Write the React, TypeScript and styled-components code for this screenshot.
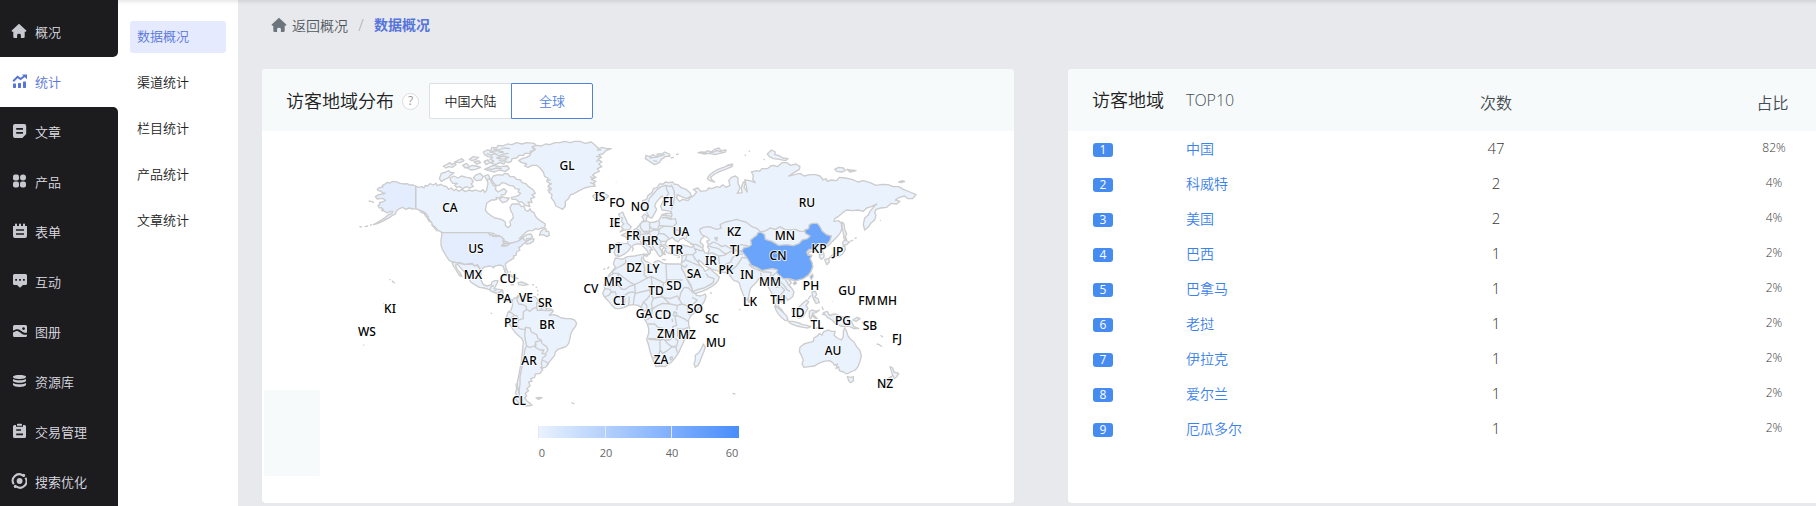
import React from "react";
import styled, { createGlobalStyle, css } from "styled-components";

const GlobalStyle = createGlobalStyle`
  * { box-sizing: border-box; }
  body {
    margin: 0;
    background: #e8e9ed;
    font-family: "Open Sans", "Noto Sans CJK SC", sans-serif;
    font-size: 14px;
    font-weight: 350;
    color: #222;
  }
  a { color: inherit; text-decoration: none; }
`;

const DARK = "#1c1c1e";
const BLUE = "#5674da";

const Page = styled.div`
  display: flex;
  height: 100vh;
  min-height: 506px;
  overflow: hidden;
`;

const SideNav = styled.nav`
  flex: 0 0 118px;
  background: #fff;
  border-top: 7px solid ${DARK};
`;

const SideItem = styled.a<{ $state?: "active" | "before" | "after" }>`
  display: flex;
  align-items: center;
  gap: 8px;
  height: 50px;
  padding: 0 0 2px 11px;
  font-size: 13px;
  color: #dcdce2;
  background: ${DARK};
  svg { width: 16px; height: 16px; color: #c8c8d0; }
  ${(p) => p.$state === "before" && css`border-bottom-right-radius: 5px;`}
  ${(p) => p.$state === "after" && css`border-top-right-radius: 5px;`}
  ${(p) => p.$state === "active" && css`
    background: #fff;
    color: ${BLUE};
    svg { color: ${BLUE}; }
  `}
`;

const SubNav = styled.nav`
  flex: 0 0 120px;
  display: flex;
  flex-direction: column;
  gap: 14px;
  padding: 21px 12px 0;
  background: #fff;
  box-shadow: inset 0 6px 5px -5px rgba(0, 0, 0, 0.14);
`;

const SubItem = styled.a<{ $active?: boolean }>`
  height: 32px;
  line-height: 31px;
  padding-left: 7px;
  border-radius: 3px;
  font-size: 13px;
  color: ${(p) => (p.$active ? BLUE : "#222")};
  background: ${(p) => (p.$active ? "#e5eaff" : "transparent")};
`;

const Main = styled.main`
  flex: 1;
  min-width: 0;
  display: flex;
  flex-direction: column;
  padding: 0 0 3px 24px;
  box-shadow: inset 0 6px 5px -5px rgba(0, 0, 0, 0.14);
`;

const Breadcrumb = styled.nav`
  display: flex;
  align-items: center;
  height: 50px;
  margin-bottom: 19px;
  padding-left: 9px;
  color: #50585f;
  svg { width: 16px; height: 16px; margin-right: 5px; color: #6c757d; }
`;

const CrumbLink = styled.a`
  display: flex;
  align-items: center;
`;

const Slash = styled.span`
  width: 26px;
  text-align: center;
  font-size: 16px;
  color: #a5aab0;
`;

const Current = styled.strong`
  padding-bottom: 2px;
  color: ${BLUE};
`;

const Cards = styled.div`
  flex: 1;
  display: flex;
  gap: 54px;
  margin-right: -4px;
`;

const Card = styled.section`
  position: relative;
  flex: 1 1 0;
  min-width: 0;
  background: #fff;
  border-radius: 4px;
  overflow: hidden;
`;

const CardHeader = styled.header`
  display: flex;
  align-items: center;
  height: 62px;
  padding: 2px 0 0 24px;
  background: #f6fafb;
`;

const Title = styled.h2`
  margin: 0;
  font-size: 18px;
  font-weight: inherit;
  line-height: 24px;
  color: #222;
`;

const Help = styled.button`
  width: 17px;
  height: 17px;
  margin: 0 10px 0 8px;
  padding: 0;
  border: 1px solid #dcdcdc;
  border-radius: 50%;
  background: #fff;
  font: 12px/14px "Open Sans", sans-serif;
  color: #999;
`;

const Switch = styled.div`
  display: flex;
`;

const SwitchButton = styled.button<{ $active?: boolean }>`
  width: 82px;
  height: 36px;
  padding: 0 0 1px;
  border: 1px solid ${(p) => (p.$active ? "#5080e0" : "#dcdfe3")};
  border-right-width: ${(p) => (p.$active ? "1px" : "0")};
  border-radius: ${(p) => (p.$active ? "0 2px 2px 0" : "2px 0 0 2px")};
  background: #fff;
  font-family: inherit;
  font-size: 13px;
  font-weight: inherit;
  color: ${(p) => (p.$active ? "#5080e0" : "#222")};
`;

const MapArea = styled.div`
  svg { display: block; width: 100%; height: 372px; }
`;

const Tip = styled.div`
  position: absolute;
  left: 2px;
  bottom: 27px;
  width: 56px;
  height: 86px;
  border-radius: 2px;
  background: #f6fafb;
`;

const Table = styled.table`
  width: 100%;
  table-layout: fixed;
  border-collapse: collapse;
  thead tr { height: 62px; background: #f6fafb; }
  tbody tr { height: 35px; }
  th, td { padding: 0; }
  th { font-size: 16px; font-weight: inherit; color: #454c52; text-align: left; }
`;

const RankHead = styled.th`
  && { width: 118px; padding-left: 24px; }
`;
const NameHead = styled.th`
  && { width: 78px; }
`;
const CountHead = styled.th`
  && { text-align: center; padding-top: 3px; }
`;
const RatioHead = styled.th`
  && { width: 92px; text-align: center; padding: 3px 3px 0 0; }
`;

const RankCell = styled.td`
  && { padding: 3px 0 0 25px; }
`;
const Badge = styled.span`
  display: block;
  width: 20px;
  height: 14px;
  border-radius: 3px;
  background: #468cf0;
  color: #fff;
  font-size: 12px;
  font-weight: 400;
  line-height: 14px;
  text-align: center;
`;
const NameCell = styled.td`
  && { padding-bottom: 2px; }
  color: #3c82e8;
  font-size: 14px;
  white-space: nowrap;
`;
const CountCell = styled.td`
  && { padding-bottom: 2px; }
  text-align: center;
  font-size: 15px;
  color: #383838;
`;
const RatioCell = styled.td`
  && { padding-bottom: 3px; }
  text-align: center;
  font-size: 12px;
  color: #383838;
`;

const Icon = ({ children }: { children: React.ReactNode }) => (
  <svg viewBox="0 0 16 16" fill="currentColor" aria-hidden="true">{children}</svg>
);

const HomeIcon = () => (
  <Icon>
    <path d="M8 .8 15.3 7.6Q15.8 8.6 14.6 8.7H13.7V13.7Q13.7 15 12.4 15H9.9V12Q9.9 10.8 8 10.8T6.1 12V15H3.6Q2.3 15 2.3 13.7V8.7H1.4Q.2 8.6.7 7.6Z" />
  </Icon>
);

const ICONS: Record<string, React.ReactNode> = {
  stats: (
    <Icon>
      <rect x="2" y="10.5" width="3" height="4.4" rx=".6" />
      <rect x="7" y="10" width="3" height="4.9" rx=".6" />
      <rect x="12" y="8.6" width="3" height="6.3" rx=".6" />
      <path d="M2.2 8.2 6.6 3.9 9.6 6 13.6 3" fill="none" stroke="currentColor" strokeWidth="2" />
      <path d="M11 1.4H16V6.2Z" />
    </Icon>
  ),
  doc: (
    <Icon>
      <path fillRule="evenodd" d="M4 1H13.2Q15.2 1 15.2 3V11L11.4 15H4Q2 15 2 13V3Q2 1 4 1ZM5.2 5V6.8H12V5ZM5.2 9V10.8H12V9Z" />
    </Icon>
  ),
  grid: (
    <Icon>
      <rect x="2" y="1.4" width="6" height="6" rx="2" />
      <rect x="9" y="1.4" width="6" height="6" rx="3" />
      <rect x="2" y="8.4" width="6" height="6" rx="2" />
      <rect x="9" y="8.4" width="6" height="6" rx="2" />
    </Icon>
  ),
  form: (
    <Icon>
      <path fillRule="evenodd" d="M2 3H4V1.2Q4 .6 5 .6T6 1.2V3H8V1.2Q8 .6 9 .6T10 1.2V3H12V1.2Q12 .6 13 .6T14 1.2V3H16V13Q16 15 14 15H4Q2 15 2 13ZM5 6.2V7.8H13V6.2ZM5 10.2V11.8H13V10.2Z" />
    </Icon>
  ),
  chat: (
    <Icon>
      <path fillRule="evenodd" d="M3.5 1H14.5Q16 1 16 2.5V10.5Q16 12 14.5 12H12L9 14.8 6 12H3.5Q2 12 2 10.5V2.5Q2 1 3.5 1ZM4.2 6V7.8H6V6ZM8.1 6V7.8H9.9V6ZM12 6V7.8H13.8V6Z" />
    </Icon>
  ),
  album: (
    <Icon>
      <path fillRule="evenodd" d="M3.5 2H14.5Q16 2 16 3.5V9.6C11.5 10.8 10 6 6.5 6.2 4.6 6.2 3.3 6.9 2 7.6V3.5Q2 2 3.5 2ZM12.5 4.2A1.4 1.4 0 1 0 12.6 4.2Z" />
      <path d="M2 9.6C4 8.4 5.6 7.8 7 8.2 10 9.2 11 12.4 16 11.8V12.5Q16 14 14.5 14H3.5Q2 14 2 12.5Z" />
    </Icon>
  ),
  data: (
    <Icon>
      <path d="M2 4C2 1.4 15 1.4 15 4S2 6.6 2 4Z" />
      <path d="M2 5.9C4 7.7 13 7.7 15 5.9V8C14 10.4 3 10.4 2 8Z" />
      <path d="M2 10C4 11.8 13 11.8 15 10V12C14 14.5 3 14.5 2 12Z" />
    </Icon>
  ),
  trade: (
    <Icon>
      <path fillRule="evenodd" d="M3.5 2H5V3.8H12V2H13.5Q15 2 15 3.5V13.5Q15 15 13.5 15H3.5Q2 15 2 13.5V3.5Q2 2 3.5 2ZM5.2 6.2V7.7H10V6.2ZM5.2 10.6V12.2H12V10.6Z" />
      <rect x="6" y=".8" width="5" height="2" rx=".6" />
    </Icon>
  ),
  seo: (
    <Icon>
      <circle cx="8.6" cy="8" r="2.9" />
      <g fill="none" stroke="currentColor" strokeWidth="2">
        <path d="M2.8 11.2A6.4 6.4 0 0 1 11.6 2.3" />
        <path d="M14.4 4.8A6.4 6.4 0 0 1 5.6 13.7" />
      </g>
      <circle cx="12.6" cy="2.4" r="1.6" />
      <circle cx="4.4" cy="13.4" r="1.6" />
    </Icon>
  ),
};

const SIDE: [string, string][] = [
  ["home", "概况"],
  ["stats", "统计"],
  ["doc", "文章"],
  ["grid", "产品"],
  ["form", "表单"],
  ["chat", "互动"],
  ["album", "图册"],
  ["data", "资源库"],
  ["trade", "交易管理"],
  ["seo", "搜索优化"],
];

const SUB = ["数据概况", "渠道统计", "栏目统计", "产品统计", "文章统计"];

const ROWS: [string, number, string][] = [
  ["中国", 47, "82%"],
  ["科威特", 2, "4%"],
  ["美国", 2, "4%"],
  ["巴西", 1, "2%"],
  ["巴拿马", 1, "2%"],
  ["老挝", 1, "2%"],
  ["伊拉克", 1, "2%"],
  ["爱尔兰", 1, "2%"],
  ["厄瓜多尔", 1, "2%"],
];

const LABELS: [string, number, number][] = [
  ["CA", 450, 208], ["US", 476, 249], ["MX", 473, 275], ["CU", 508, 279],
  ["KI", 390, 309], ["WS", 367, 332], ["PA", 504, 299], ["VE", 526, 298],
  ["SR", 545, 303], ["CV", 591, 289], ["PE", 511, 323], ["BR", 547, 325],
  ["AR", 529, 361], ["CL", 519, 401], ["GL", 567, 166], ["IS", 600, 197],
  ["FO", 617, 203], ["NO", 640, 207], ["FI", 668, 202], ["IE", 615, 223],
  ["FR", 633, 236], ["HR", 650, 241], ["UA", 681, 232], ["PT", 615, 249],
  ["TR", 676, 250], ["KZ", 734, 232], ["DZ", 634, 268], ["LY", 653, 269],
  ["SA", 694, 274], ["IR", 711, 261], ["PK", 726, 270], ["TJ", 735, 250],
  ["MR", 613, 282], ["TD", 656, 291], ["SD", 674, 286], ["CI", 619, 301],
  ["GA", 644, 314], ["CD", 663, 315], ["SO", 695, 309], ["SC", 712, 319],
  ["RU", 807, 203], ["MN", 785, 236], ["CN", 778, 256], ["KP", 819, 249],
  ["JP", 838, 252], ["IN", 747, 275], ["ZM", 666, 334], ["MZ", 687, 335],
  ["MU", 716, 343], ["ZA", 661, 360], ["LK", 750, 302], ["TH", 778, 300],
  ["MM", 770, 282], ["PH", 811, 286], ["GU", 847, 291], ["FM", 867, 301],
  ["MH", 887, 301], ["ID", 798, 313], ["TL", 817, 325], ["PG", 843, 321],
  ["SB", 870, 326], ["FJ", 897, 339], ["AU", 833, 351], ["NZ", 885, 384],
];

/* Land outlines, at three units to a map unit. */
const ALASKA =
  "M197,168 190,165 178,165 172,161 165,162 150,160 138,155 128,154 120,159 112,157 104,163 97,166 99,171 90,172 82,177 84,182 92,183 98,188 106,190 96,192 86,194 76,200 82,207 92,206 100,206 106,211 98,216 88,217 90,223 84,226 88,234 94,233 100,238 94,241 104,244 112,249 120,245 128,244 126,250 116,254 106,262 94,270 82,278 70,284 82,281 96,275 108,268 120,262 128,256 136,252 140,242 148,236 158,232 166,238 178,234 188,237 197,236Z";
const CANADA =
  "M197,168 206,172 216,170 222,174 226,166 232,168 240,161 250,165 258,160 262,167 272,163 282,168 290,170 296,178 304,174 312,182 318,177 326,184 336,178 346,185 356,180 366,183 378,180 390,185 400,179 404,188 410,180 414,160 410,148 418,144 424,156 430,166 438,170 436,178 444,186 452,182 462,176 470,184 464,194 456,194 452,201 446,204 438,202 440,208 432,210 424,210 418,214 410,220 408,230 406,240 412,248 422,256 434,264 446,266 458,270 466,276 466,286 474,293 482,286 480,274 490,264 488,252 482,242 480,232 486,222 498,222 508,222 514,230 522,228 526,240 534,244 540,236 544,244 552,248 556,258 562,266 574,274 586,282 584,292 574,294 566,298 556,296 548,302 536,302 526,308 516,318 508,326 518,322 530,314 542,312 548,320 540,326 530,326 530,334 540,328 552,326 550,334 540,340 530,342 524,336 518,328 510,330 502,336 488,338 478,340 470,346 460,348 455,345 464,340 462,328 452,320 440,316 430,310 415,308 276,308 270,304 262,300 256,292 248,286 244,276 236,272 234,262 226,258 224,250 214,248 208,240 197,236Z";
const USA =
  "M276,308 415,308 420,316 430,312 440,318 454,320 460,328 462,338 455,348 470,348 480,340 490,338 502,334 510,330 518,324 524,330 528,336 520,342 512,350 506,352 510,360 500,366 498,376 490,378 492,384 480,392 472,396 466,402 468,414 474,426 470,434 464,424 460,410 452,405 440,407 430,410 432,414 420,408 410,410 400,412 396,422 390,416 382,404 374,408 366,400 354,402 344,403 330,398 316,398 304,394 298,392 290,380 284,370 277,358 273,346 273,330 275,318Z";
const MEXICO =
  "M306,396 330,400 344,404 366,402 374,408 382,406 390,418 394,426 392,438 394,452 400,464 412,468 424,464 426,456 434,452 444,452 440,462 436,470 432,476 446,478 458,480 460,490 456,500 466,508 478,506 488,510 484,516 474,512 464,514 452,500 440,490 428,486 416,478 402,474 388,472 374,464 362,456 358,448 360,440 350,432 340,422 332,414 322,402 316,406 322,418 330,428 336,440 328,436 318,420 310,408Z";
const SOUTH_AMERICA =
  "M486,512 494,504 500,502 506,496 512,500 520,500 526,496 540,500 556,500 562,508 566,518 574,528 584,532 594,536 606,538 610,544 604,550 598,556 612,554 624,558 634,564 648,566 662,566 674,570 680,580 676,590 668,600 662,612 660,626 656,640 648,650 636,654 624,658 616,666 614,676 606,686 598,696 592,706 586,712 578,714 572,712 578,720 570,730 556,732 554,742 542,746 546,754 536,756 540,768 530,776 536,782 526,790 530,798 524,804 530,812 540,820 546,826 530,828 516,824 504,816 496,806 502,798 496,788 502,772 502,756 506,738 510,716 514,696 516,676 518,656 520,636 516,626 504,616 494,606 486,594 480,584 470,570 470,558 474,546 482,542 486,532 488,522Z";
const WEST_ISLANDS = [
  "M302,152 300,144 312,138 324,144 334,138 350,142 362,144 370,154 364,162 370,170 358,174 350,170 338,176 330,170 320,172 314,166 322,160 308,160Z",
  "M268,146 274,130 288,126 296,122 304,128 312,128 302,136 294,144 284,148 274,154Z",
  "M280,108 290,104 300,98 306,104 316,98 318,104 308,112 296,110 288,114Z",
  "M314,96 326,90 336,86 342,92 330,98Z",
  "M358,88 370,80 386,82 378,88 366,92Z",
  "M338,106 350,100 358,110 346,114Z",
  "M352,114 366,106 380,108 392,112 376,118 362,120Z",
  "M372,96 386,92 392,98 380,102Z",
  "M376,136 390,130 400,140 394,150 380,152 370,144Z",
  "M404,118 416,112 430,106 450,110 472,108 478,116 466,124 448,120 434,126 416,122Z",
  "M400,66 412,60 422,62 426,52 440,54 444,46 458,48 472,42 486,44 500,38 516,42 530,38 552,40 560,48 548,54 556,60 540,64 544,70 524,70 520,76 508,76 500,84 486,86 484,94 476,98 466,94 462,102 448,98 438,104 424,100 430,92 420,88 428,82 414,80 404,74Z",
  "M420,66 440,62 460,66 440,72ZM440,84 460,78 476,82 460,88Z",
  "M402,94 414,90 420,98 408,104Z",
  "M410,70 424,76 434,70 446,78 460,72 476,70M430,58 446,60 462,54 480,56M446,90 456,94 470,88M420,98 432,94M410,116 426,118 440,114 456,116",
  "M424,148 430,138 446,134 458,136 464,130 474,132 480,140 492,140 500,148 512,150 516,158 526,160 536,170 550,180 556,190 546,194 554,202 542,206 546,218 534,216 540,230 526,226 516,216 506,216 498,208 486,208 484,202 496,200 506,196 512,190 504,186 508,178 496,176 490,168 478,166 466,160 456,158 448,166 438,166 430,158Z",
  "M448,208 458,200 468,204 478,204 470,214 458,218Z",
  "M404,138 414,134 420,144 410,150Z",
  "M568,316 572,306 578,298 588,296 588,304 596,304 598,316 590,320 580,314Z",
  "M28,290 36,291M44,290 54,288M56,213 66,215 72,218M60,286 66,284",
  "M220,244 232,256M226,248 236,262M230,262 240,276M236,266 244,278M244,284 258,298M250,290 262,304M212,240 228,254",
  "M420,312 434,318 448,316M426,318 440,320M456,334 468,334 480,342M458,344 472,346 482,338M462,340 476,340",
  "M454,438 466,430 480,434 492,440 504,446 496,446 480,438 466,436Z",
  "M504,458 514,456 526,460 534,464 520,466 506,464Z",
  "M482,464 492,465M546,464 552,465M558,470 560,474M562,480 564,484M562,492 565,496M466,418 470,420M480,424 482,428",
  "M558,804 568,802 576,803 566,808ZM664,818 674,822M422,549 426,551M118,448 122,450M126,452 134,460M100,520 103,522M40,645 43,646",
];
const WEST_BORDERS =
  "M474,546 484,548 494,556 502,558M470,562 480,566 488,560 494,554M502,558 506,570 520,566 520,546 530,538 528,528 518,524 506,522 500,508 508,498M530,538 540,544 548,536 560,532 560,518 566,518M560,532 562,542 574,540 586,542 598,542 606,540M574,540 576,528M588,542 590,534M506,570 502,582 506,594 516,598 526,598 526,592 540,594 544,606 560,614 564,626 574,630 576,642M526,598 524,616 526,630 530,648 538,652 548,650 558,646 556,636 572,632M530,648 524,660 522,680 518,700 514,720 510,740 510,760 508,780 508,804 514,820M556,642 556,652 570,660 582,660 576,670 586,672 594,660 590,650 578,642M590,674 578,684 574,700 576,712M576,690 590,696 594,704M420,480 424,468 432,468M430,484 440,480M440,490 458,482M452,500 460,496M474,514 478,506M504,772 506,790M498,760 500,780";

const GREENLAND =
  "M-64,92 -54,86 -40,82 -30,76 -26,66 -14,58 -24,50 -8,46 4,48 16,42 30,44 44,38 60,38 74,34 90,38 104,34 120,34 136,40 154,36 164,44 176,56 186,52 200,56 214,56 198,62 188,72 176,74 184,82 174,88 186,96 176,102 186,110 172,116 178,124 164,130 158,136 168,142 154,148 168,154 160,160 166,168 150,170 134,174 118,182 100,192 92,194 84,208 76,214 76,228 68,238 60,234 48,228 42,214 34,204 36,194 26,186 34,176 24,170 30,160 20,154 24,144 14,140 10,126 0,114 -10,106 -24,106 -36,112 -46,108 -40,102 -54,98Z";
const EURASIA =
  "M308,240 302,230 312,222 308,212 320,208 324,196 336,188 340,176 352,172 358,162 370,162 376,156 386,158 398,156 402,162 414,164 422,172 438,178 450,188 454,198 440,206 424,200 412,194 410,204 418,214 428,208 444,212 450,204 462,196 470,186 460,178 474,174 482,184 500,182 506,174 516,176 530,170 540,172 548,164 558,172 570,166 566,152 574,142 586,138 594,144 594,160 600,174 592,190 606,188 604,172 610,156 616,158 612,172 622,186 618,164 614,150 630,152 646,158 638,148 640,136 634,126 650,122 658,124 666,116 682,116 692,108 700,106 712,110 726,98 740,98 752,106 768,102 780,110 778,118 762,128 746,138 764,134 780,130 792,138 810,134 826,134 840,138 850,150 858,146 862,154 874,150 890,152 898,142 916,144 936,148 954,156 970,152 990,158 1008,166 1026,163 1044,164 1060,170 1076,170 1090,178 1110,186 1128,194 1118,206 1104,206 1094,198 1078,202 1066,210 1080,214 1070,222 1054,220 1040,232 1022,234 1008,238 1004,248 1008,256 1004,270 992,280 986,290 974,300 970,284 974,264 984,256 990,244 1000,232 1010,222 994,230 980,234 970,244 954,240 938,242 920,240 908,248 894,260 884,266 882,274 896,272 904,280 906,296 900,310 890,322 878,334 868,344 860,350 854,356 846,362 852,372 852,382 844,388 838,382 840,374 832,364 824,362 808,366 802,374 814,376 810,386 816,398 818,410 812,426 804,436 790,444 770,450 756,450 746,448 754,458 748,466 756,476 762,486 758,500 748,508 742,510 736,500 728,496 722,502 724,516 716,512 710,506 712,518 716,530 726,540 732,552 722,546 712,536 704,520 700,506 696,492 690,480 684,468 676,464 672,450 664,444 656,446 650,456 640,466 632,474 628,488 626,502 620,510 614,504 608,490 602,474 598,460 592,454 582,452 574,442 566,432 556,428 546,426 530,422 516,418 504,412 494,406 484,396 476,390 476,400 484,410 490,414 494,424 502,420 510,414 516,422 528,432 538,442 534,452 526,462 514,470 500,478 486,484 474,488 462,492 456,480 454,468 446,454 438,442 430,428 424,414 422,404 426,392 426,382 424,372 410,376 394,372 382,368 374,360 372,350 364,348 358,352 364,362 368,374 360,380 354,374 350,366 342,356 336,346 326,338 318,332 314,336 322,346 332,352 338,360 330,360 332,368 326,374 322,362 312,352 304,342 292,342 282,344 272,352 266,362 256,370 246,376 236,380 226,376 222,366 228,352 224,342 234,338 250,341 262,340 264,330 256,320 244,316 256,310 268,306 280,300 290,294 298,286 304,278 312,270 306,260 314,252 322,258 318,272 330,278 344,276 356,272 362,262 366,254 378,250 392,250 394,244 380,242 366,240 362,228 368,216 374,206 366,198 358,206 348,218 344,228 350,238 344,250 336,264 328,262 322,250 316,240Z";
const CHINA =
  "M662,306 674,314 676,328 696,334 716,346 740,344 760,347 778,340 786,330 802,326 810,318 796,310 794,300 806,296 808,284 818,280 832,280 840,290 846,302 860,314 874,318 870,332 858,346 842,344 830,350 818,358 808,358 800,366 804,376 816,376 810,386 816,398 818,410 812,426 804,436 790,446 768,452 748,446 730,446 718,436 710,428 712,420 698,416 682,418 666,422 650,412 634,406 626,392 618,380 606,364 610,354 626,350 634,344 632,330 642,322 650,316 654,308ZM810,440 818,432 819,440 814,448ZM760,460 766,454 769,460 763,464Z";
const AFRICA =
  "M226,384 238,386 246,388 262,380 284,378 302,374 312,374 310,384 314,392 326,398 338,404 346,394 356,392 370,400 388,402 404,402 418,402 426,406 424,414 432,428 440,446 448,462 456,476 460,486 470,496 482,498 496,492 498,500 492,516 480,532 466,546 452,558 446,570 446,584 450,600 446,616 434,628 428,642 422,654 418,664 408,680 400,690 388,702 374,710 360,708 348,710 342,698 336,682 330,664 326,646 320,628 326,610 326,596 322,582 314,568 306,556 312,544 304,532 294,526 280,524 266,526 254,532 240,536 226,536 214,524 204,512 194,502 188,490 194,476 192,464 198,450 206,436 216,424 226,412 220,402Z";
const AUSTRALIA =
  "M780,652 792,642 806,638 820,634 822,624 834,616 838,610 846,616 850,606 866,600 874,604 886,604 882,616 892,624 904,630 910,620 910,604 914,594 920,604 924,618 932,628 942,636 950,650 960,662 964,678 960,694 954,710 946,720 932,726 920,732 910,726 898,722 896,710 888,716 892,702 884,706 878,698 868,692 852,694 836,700 824,708 808,710 792,712 786,702 790,690 784,676 778,664Z";
const EAST_ISLANDS = [
  "M158,198 166,192 174,196 178,188 194,190 206,198 196,208 180,210 166,208Z",
  "M316,86 318,76 330,80 340,74 350,82 352,72 366,72 374,66 388,72 390,78 376,80 364,88 358,98 344,104 334,98 326,92Z",
  "M392,84 402,82M408,74 416,72M228,156 229,157",
  "M474,68 484,66 496,68 502,62 514,66 524,58 536,54 544,62 558,60 556,66 540,70 524,74 508,70 494,72Z",
  "M484,68 500,66M508,68 522,66 530,62 546,66M328,84 344,82 358,78 374,74M340,92 352,94",
  "M36,160 28,166M24,150 32,150M30,174 22,182M170,60 184,60M168,80 180,80M176,92 168,94M150,140 162,146M150,158 164,162",
  "M578,104 566,106 550,112 534,118 520,126 508,136 502,146 510,152 524,156 516,150 512,142 524,132 540,124 556,118 576,110Z",
  "M236,252 248,246 252,256 258,268 262,280 274,290 268,300 254,300 240,306 250,296 242,290 252,282 244,274 248,264 240,262Z",
  "M220,270 232,264 238,274 234,288 220,292 214,282Z",
  "M490,642 496,652 492,664 486,678 480,694 474,706 466,712 462,702 466,690 466,676 476,668 484,656Z",
  "M682,72 694,60 706,66 704,74 716,76 728,84 744,86 736,92 718,88 700,86 688,80Z",
  "M670,88 674,89M614,76 618,75M626,64 630,63M560,106 578,102",
  "M884,118 896,112 910,114 916,122 904,126 890,124ZM920,118 932,120 948,122 930,126Z",
  "M1076,156 1086,152 1094,154 1084,158Z",
  "M868,384 880,380 896,380 908,372 916,358 914,344 908,350 904,362 892,368 876,376Z",
  "M854,388 866,386 868,396 860,404Z",
  "M908,338 914,330 928,336 920,344 910,346Z",
  "M906,276 912,282 914,298 920,312 916,320 920,330 912,326 910,308 906,292Z",
  "M930,334 940,330M944,326 950,323M1020,270 1022,272",
  "M704,528 714,534 728,546 740,558 744,570 736,572 724,562 714,550 708,540Z",
  "M744,574 758,574 774,578 788,584 802,586 812,590 804,594 790,592 770,588 754,582Z",
  "M756,538 770,538 780,528 790,518 800,510 806,516 798,526 804,536 796,548 790,560 778,564 764,560 758,550Z",
  "M808,544 816,540 828,544 838,540 828,548 816,550 824,558 832,566 824,564 816,556 812,568 808,560Z",
  "M816,486 826,484 830,494 824,502 834,506 838,518 828,520 822,510 818,500ZM804,508 814,496M820,506 826,514",
  "M846,530 850,540M846,552 860,556M820,596 832,594 852,592",
  "M850,548 862,544 868,556 884,552 900,558 920,566 934,574 942,590 956,596 942,596 926,588 914,590 902,588 888,582 876,570 862,562Z",
  "M938,570 952,562 960,566 948,574Z",
  "M966,576 980,586M984,588 992,594M1010,642 1018,644 1026,650M1022,616 1028,622M1078,628 1080,630M876,514 877,515",
  "M1050,710 1058,714 1062,726 1076,730 1070,740 1062,746 1058,736Z",
  "M1056,738 1050,750 1038,764 1026,772 1016,766 1032,756 1046,744Z",
  "M922,740 932,742 940,740 940,752 932,758 926,752Z",
  "M624,506 630,512 628,518 624,514ZM276,350 280,356 276,364M310,372 324,374 320,380ZM366,388 378,390M412,384 420,380",
  "M190,418 196,416M202,416 208,410M510,490 516,488M578,790 586,792M598,538 601,540",
  "M402,546 410,548 408,560 400,556ZM396,566 398,576",
];
const SEAS =
  "M376,344 380,332 390,326 398,322 404,330 414,336 420,328 432,324 436,330 450,338 462,348 456,352 440,348 424,344 400,346 382,350ZM484,326 494,318 504,324 508,330 500,334 506,344 502,350 508,358 504,370 494,368 488,356 490,346 480,336ZM524,324 532,322 530,332ZM372,352 378,356 372,366 376,374 370,372 366,360Z";
const EAST_BORDERS =
  "M318,238 324,220 328,206 340,192 352,178 364,170 378,166 380,178 386,190 378,202M378,166 390,170 396,164M396,168 402,182 404,200 400,224 394,238M378,250 380,262 366,264M366,256 392,258M394,246 396,256 392,266 380,262M358,274 358,286 352,298 336,296 328,288 330,278M300,280 302,294 310,304 328,304 330,290M290,296 302,306 300,314 298,326 304,340M262,340 272,348M224,346 236,350 234,378M380,264 392,268 406,266 410,280 398,290 372,288 358,286M358,298 372,288 398,290 410,300 430,304 442,312 438,326M358,298 356,310 372,312 384,322 388,328M356,310 350,322 362,334 380,334M362,336 364,346 376,344M350,322 336,320 322,322 318,330M334,322 344,334 350,346 362,344M310,306 330,306 340,300 356,300M300,314 314,312 328,310 332,320M304,276 318,274M462,352 468,366 458,374 440,374 424,378M450,342 470,344 488,354M466,356 480,362 490,362M458,374 466,388 476,398M440,376 436,390 426,398M436,390 452,396 470,404 484,408M426,406 436,412 442,404M502,372 516,368 536,378 538,400 546,414 540,426M536,378 552,376 572,364 590,362 606,366M540,408 556,404 572,396 578,382 594,374 608,372M576,434 574,420 588,410 598,396 606,382 620,384M478,298 490,292 508,290 530,298 544,294 540,284 556,276 576,272 590,268 600,272 618,276 636,290 652,296 662,306M478,298 484,312 494,320M508,344 520,336 534,342 546,350 556,346 568,354 584,346 604,344 624,348M506,348 520,352 536,356 548,366 560,374M570,356 584,356 592,362 606,362M460,484 474,478 492,474 506,466 520,458 522,446 504,440 498,430M662,306 678,302 690,294 706,298 720,290 734,298 750,300 766,298 780,304 796,304M626,402 636,412 654,420 666,424 668,416M668,426 684,426 694,428 690,440 678,446 674,456M664,444 662,428M694,440 704,432 714,424M698,440 706,448 700,464 710,472 722,468 734,480 726,490 716,498M722,456 732,466 742,480 750,484M736,448 744,462 752,472M816,360 830,366M836,374 848,372";
const AFRICA_BORDERS =
  "M256,388 258,398 246,406 230,414 218,424 218,432 204,440M306,380 304,392 312,404 314,418 312,434 322,444 300,456 284,464 272,458 250,442 234,430 216,430M234,430 238,468 210,470 194,464M238,468 246,478 256,478 266,470 284,464M378,402 380,450 428,450M322,444 334,440 370,458M334,442 336,462 328,480 286,490 284,464M370,458 368,480 362,490 368,502M380,450 378,458 370,458M286,490 282,504 280,524M328,480 332,492 322,506 310,516 304,530M332,492 340,506 354,502 368,500 380,512 390,522M368,502 390,506 412,498 418,510M432,472 422,490 418,508 426,522 444,528 460,522 472,510 456,502M432,472 446,474 460,490M444,528 442,548 450,554M426,522 412,526 410,540M410,556 432,566 444,574M390,522 412,526M404,544 406,566 410,586 398,590 400,606 404,614M324,582 344,582 354,592 372,596 374,608 390,606 402,612M358,610 358,626 324,626M326,628 360,630 374,628M360,630 360,660 354,684 338,682M374,630 384,642 396,650 382,662 368,670 360,660M374,630 388,630 400,622 414,632 410,648 396,650M446,592 428,598 414,596 412,620M396,650 408,652 412,668M194,476 210,478 214,486 206,496 196,500M214,486 226,486 230,500 220,514M230,500 254,496 254,530M268,500 266,526M254,496 266,488 278,486 286,490M310,516 320,526 322,540 310,544M340,506 334,522 338,536 322,540M338,536 332,562 320,570M338,536 354,526 368,520 390,522M390,682 396,680 398,686 392,690Z";

const Land = styled.g`
  fill: #eaf2fd;
  stroke: #ccc;
  stroke-width: 4;
  stroke-linejoin: round;
`;

const LandShape = styled.path<{ $tone?: "deep" | "sea" | "line" | "top" }>`
  ${(p) => p.$tone === "deep" && css`fill: #e3edfd;`}
  ${(p) => p.$tone === "sea" && css`fill: #fff;`}
  ${(p) => p.$tone === "line" && css`fill: none;`}
  ${(p) => p.$tone === "top" && css`fill: #6ba5fb;`}
`;

const MapText = styled.text`
  font-family: "Noto Sans", "Open Sans", sans-serif;
  font-size: 12px;
  font-weight: 500;
  text-anchor: middle;
  fill: #000;
  stroke: rgba(255, 255, 255, 0.75);
  stroke-width: 2px;
  stroke-linejoin: round;
  paint-order: stroke;
`;

const ScaleText = styled.text`
  font-family: "Open Sans", sans-serif;
  font-size: 11px;
  font-weight: 400;
  text-anchor: middle;
  fill: #666;
`;

const WorldMap = () => (
  <svg viewBox="262 131 752 372" role="img" aria-label="访客地域分布">
    <defs>
      <linearGradient id="scale">
        <stop offset="0" stopColor="#eaf2fd" />
        <stop offset="1" stopColor="#488dfb" />
      </linearGradient>
    </defs>
    <Land transform="translate(350 130) scale(.33333)">
      <LandShape d={CANADA} />
      <LandShape d={ALASKA} $tone="deep" />
      <LandShape d={USA} $tone="deep" />
      <LandShape d={MEXICO} />
      <LandShape d={SOUTH_AMERICA} />
      <LandShape d={WEST_BORDERS} $tone="line" />
      {WEST_ISLANDS.map((d) => <LandShape key={d} d={d} />)}
    </Land>
    <Land transform="translate(540 130) scale(.33333)">
      <LandShape d={GREENLAND} />
      <LandShape d={EURASIA} />
      <LandShape d={SEAS} $tone="sea" />
      <LandShape d={AFRICA} />
      <LandShape d={AUSTRALIA} />
      <LandShape d={EAST_BORDERS + AFRICA_BORDERS} $tone="line" />
      <LandShape d={CHINA} $tone="top" />
      {EAST_ISLANDS.map((d) => <LandShape key={d} d={d} />)}
    </Land>
    {LABELS.map(([name, x, y]) => (
      <MapText key={name} x={x} y={y + 4}>{name}</MapText>
    ))}
    <rect x="538" y="426" width="201" height="12" fill="url(#scale)" />
    <path d="M538.5 426V438M605.5 426V438M671.5 426V438" stroke="#e4e9f0" />
    {([[0, 542], [20, 606], [40, 672], [60, 732]] as const).map(([n, x]) => (
      <ScaleText key={n} x={x} y={457}>{n}</ScaleText>
    ))}
  </svg>
);

export default function App() {
  return (
    <>
      <GlobalStyle />
      <Page>
        <SideNav>
          {SIDE.map(([icon, label], i) => (
            <SideItem
              key={label}
              href="#"
              $state={i === 1 ? "active" : i === 0 ? "before" : i === 2 ? "after" : undefined}
            >
              {icon === "home" ? <HomeIcon /> : ICONS[icon]}
              {label}
            </SideItem>
          ))}
        </SideNav>
        <SubNav>
          {SUB.map((label, i) => (
            <SubItem key={label} href="#" $active={i === 0}>{label}</SubItem>
          ))}
        </SubNav>
        <Main>
          <Breadcrumb>
            <CrumbLink href="#"><HomeIcon />返回概况</CrumbLink>
            <Slash>/</Slash>
            <Current>数据概况</Current>
          </Breadcrumb>
          <Cards>
            <Card>
              <CardHeader>
                <Title>访客地域分布</Title>
                <Help type="button">?</Help>
                <Switch>
                  <SwitchButton type="button">中国大陆</SwitchButton>
                  <SwitchButton type="button" $active>全球</SwitchButton>
                </Switch>
              </CardHeader>
              <MapArea><WorldMap /></MapArea>
              <Tip />
            </Card>
            <Card>
              <Table>
                <thead>
                  <tr>
                    <RankHead><Title>访客地域</Title></RankHead>
                    <NameHead>TOP10</NameHead>
                    <CountHead>次数</CountHead>
                    <RatioHead>占比</RatioHead>
                  </tr>
                </thead>
                <tbody>
                  {ROWS.map(([name, count, ratio], i) => (
                    <tr key={name}>
                      <RankCell><Badge>{i + 1}</Badge></RankCell>
                      <NameCell><a href="#">{name}</a></NameCell>
                      <CountCell>{count}</CountCell>
                      <RatioCell>{ratio}</RatioCell>
                    </tr>
                  ))}
                </tbody>
              </Table>
            </Card>
          </Cards>
        </Main>
      </Page>
    </>
  );
}
